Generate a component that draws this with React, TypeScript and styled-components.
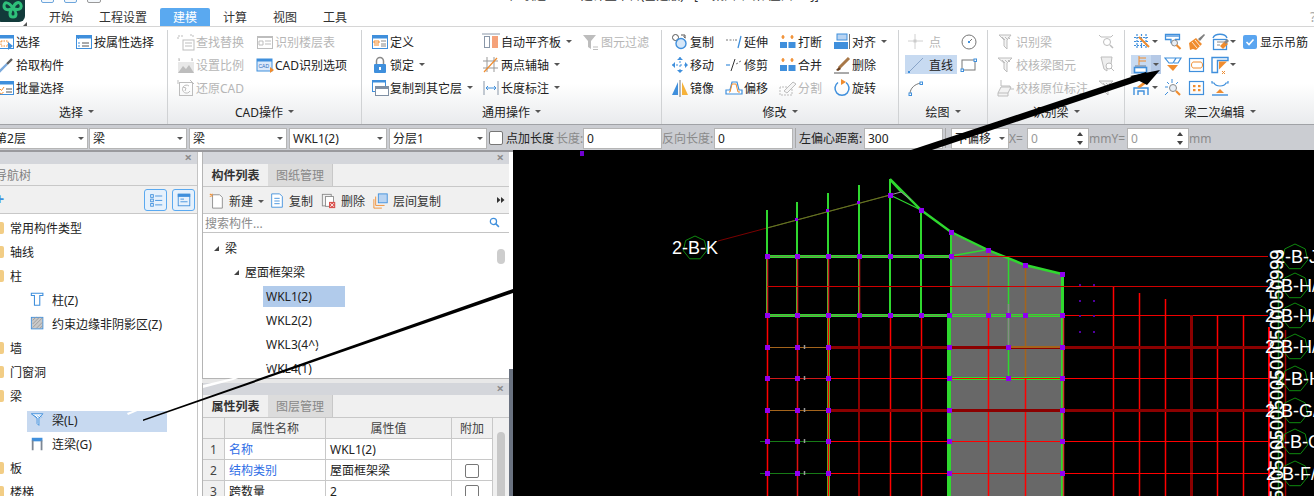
import React from "react";
import styled, { createGlobalStyle } from "styled-components";

const B = "#3f8fdc";
const O = "#f08c2e";
const G = "#bdbdbd";

const GlobalStyle = createGlobalStyle`
  html, body { margin: 0; padding: 0; background: #fff; overflow: hidden; }
  body { font-family: "Noto Sans", "Noto Sans CJK SC", sans-serif; font-size: 12px; color: #222; }
  * { box-sizing: border-box; }
`;

const Page = styled.div`
  position: relative; width: 1314px; height: 496px; overflow: hidden;
  display: flex; flex-direction: column; background: #fff;
`;
const TitleBar = styled.div`
  height: 8px; flex: none; display: flex; align-items: flex-end; overflow: hidden; padding: 0 0 5px 41px;
`;
const QuickIcon = styled.div<{ $w: number; $c: string }>`
  flex: none; width: ${(p) => p.$w}px; height: 14px; margin-right: 10px;
  border: 1px solid ${(p) => p.$c}; border-radius: 2px; background: #f4f8fc;
`;
const TitleText = styled.div`
  position: absolute; left: 510px; top: -11px; line-height: 14px; font-size: 12px; color: #333; white-space: nowrap;
`;
const Logo = styled.div`
  position: absolute; left: -4px; top: -7px; width: 29px; height: 29px; border-radius: 6px; background: #123a3a;
  display: flex; align-items: center; justify-content: center;
`;
const LogoCorner = styled.div`
  position: absolute; left: 23px; top: 22px; width: 0; height: 0;
  border-left: 4px solid transparent; border-bottom: 4px solid #555;
`;
const Help = styled.div`
  position: absolute; right: -2px; top: 8px; font-size: 14px; color: #aaa; line-height: 18px;
`;
const Tabs = styled.div`
  height: 19px; flex: none; display: flex; padding-left: 36px; border-bottom: 1px solid #d6d6d6;
`;
const Tab = styled.div<{ $active?: boolean }>`
  height: 18px; padding: 0 13px; line-height: 19px; font-size: 12px; color: ${(p) => (p.$active ? "#fff" : "#333")};
  background: ${(p) => (p.$active ? "#5aa9f0" : "transparent")}; border-radius: 2px 2px 0 0;
`;
const Ribbon = styled.div`
  height: 97px; flex: none; display: flex; margin-left: -14px;
  background: linear-gradient(#fff 0, #fff 58%, #e9ebed 100%);
`;
const Group = styled.div<{ $w: number; $pad?: number; $last?: boolean }>`
  flex: none; width: ${(p) => p.$w}px; height: 94px; margin-top: 3px; padding-left: ${(p) => p.$pad ?? 9}px;
  border-right: ${(p) => (p.$last ? "none" : "1px solid #d0d2d4")};
  display: flex; flex-direction: column; position: relative;
`;
const GroupGrid = styled.div<{ $cols: string }>`
  display: grid; grid-template-columns: ${(p) => p.$cols}; grid-auto-rows: 23px; height: 69px;
`;
const GroupLabel = styled.div<{ $pad?: number }>`
  height: 24px; padding-top: 1px; display: flex; align-items: center; justify-content: center; gap: 5px;
  margin-left: -${(p) => p.$pad ?? 9}px; font-size: 12px; color: #222;
`;
const Caret = styled.span<{ $ml?: number }>`
  display: inline-block; width: 0; height: 0; margin-left: ${(p) => p.$ml ?? 0}px; flex: none;
  border-left: 3.5px solid transparent; border-right: 3.5px solid transparent; border-top: 3.5px solid #555;
`;
const Item = styled.div<{ $off?: boolean; $active?: boolean }>`
  display: flex; align-items: center; height: 23px; white-space: nowrap; font-size: 12px;
  color: ${(p) => (p.$off ? "#b6b6b6" : "#222")};
`;
const IconBox = styled.span`
  flex: none; width: 19px; height: 18px; display: block;
  svg { display: block; }
`;
const ActiveBlock = styled.div<{ $w: number }>`
  display: flex; align-items: center; height: 19px; margin: 2px 0 0 -2px; width: ${(p) => p.$w}px; padding-left: 2px;
  background: #c7daf1; white-space: nowrap;
`;
const ActiveCaret = styled.div`
  flex: none; width: 10px; height: 19px; margin-left: -1px; background: #b5c9e6; display: flex; align-items: center; justify-content: center;
`;
const Check = styled.div`
  flex: none; width: 14px; height: 14px; border-radius: 2px; background: #5aa5f0; margin-right: 3px;
  display: flex; align-items: center; justify-content: center;
`;

const OptionBar = styled.div`
  height: 26px; flex: none; display: flex; align-items: center; background: #cbcdd2;
  border-top: 1px solid #a0a2a6; padding-top: 1px; margin-left: -12px; color: #222;
`;
const Select = styled.div<{ $w: number; $ml?: number }>`
  flex: none; width: ${(p) => p.$w}px; height: 21px; margin-left: ${(p) => p.$ml ?? 0}px; background: #fff;
  border: 1px solid #b5b5b5; display: flex; align-items: center; justify-content: space-between;
  padding: 0 3px 0 3px; white-space: nowrap;
`;
const BarCheck = styled.div`
  flex: none; width: 14px; height: 14px; margin: 0 3px 0 2px; border: 1px solid #777; border-radius: 2px; background: #fff;
`;
const BarLabel = styled.div<{ $w: number; $muted?: boolean }>`
  flex: none; width: ${(p) => p.$w}px; white-space: nowrap; color: ${(p) => (p.$muted ? "#8a8a8a" : "#222")};
`;
const BarInput = styled.div<{ $w: number; $muted?: boolean }>`
  flex: none; width: ${(p) => p.$w}px; height: 21px; background: #fff; border: 1px solid #b5b5b5; padding-left: 3px;
  line-height: 19px; color: ${(p) => (p.$muted ? "#999" : "#222")}; position: relative;
`;
const Spin = styled.div`
  position: absolute; right: 5px; top: 3px; height: 13px; display: flex; flex-direction: column; justify-content: space-between;
`;
const SpinUp = styled.span`
  display: block; width: 0; height: 0; border-left: 3.5px solid transparent; border-right: 3.5px solid transparent; border-bottom: 4px solid #444;
`;
const SpinDown = styled.span`
  display: block; width: 0; height: 0; border-left: 3.5px solid transparent; border-right: 3.5px solid transparent; border-top: 4px solid #444;
`;
const BarSep = styled.div<{ $ml: number; $mr: number }>`
  flex: none; width: 1px; height: 20px; background: #a8a8a8; margin: 0 ${(p) => p.$mr}px 0 ${(p) => p.$ml}px;
`;

const Workspace = styled.div`
  flex: 1; min-height: 0; display: flex; border-top: 2px solid #9a9a9e;
`;
const NavPanel = styled.div`
  flex: none; width: 198px; border-right: 1px solid #c4c4c4; display: flex; flex-direction: column; overflow: hidden;
`;
const Gutter = styled.div`
  flex: none; width: 4px; background: #fff;
`;
const PanelBar = styled.div`
  height: 12px; flex: none; background: #d4d6db; position: relative;
  &::after {
    content: "×"; position: absolute; right: 5px; top: -2px; line-height: 14px; font-size: 13px; font-weight: 700; color: #8c8c8c;
  }
`;
const NavTitle = styled.div`
  height: 22px; flex: none; background: #f0f0f0; border-bottom: 1px solid #c8c8c8; color: #808080;
  line-height: 23px; margin-left: -5px; padding-left: 0; font-size: 12px;
`;
const NavTools = styled.div`
  height: 28px; flex: none; background: #f0f0f0; border-bottom: 1px solid #c8c8c8; display: flex; align-items: center; justify-content: flex-end;
  padding-right: 2px; gap: 5px; position: relative;
`;
const NavToolBtn = styled.div`
  width: 23px; height: 22px; border: 1px solid #5aa9f0; border-radius: 3px; background: #e6f1fc;
  display: flex; align-items: center; justify-content: center;
`;
const PlusMark = styled.div`
  position: absolute; left: -5px; top: 5px; color: #3f8fdc; font-size: 16px; line-height: 16px; font-weight: 700;
`;
const NavTree = styled.div`
  flex: 1; padding-top: 2px; background: #fff; overflow: hidden;
`;
const NavRow = styled.div`
  height: 24px; display: flex; align-items: center; white-space: nowrap; position: relative;
  &[data-sel="1"]::before {
    content: ""; position: absolute; left: 27px; top: 3px; width: 140px; height: 21px; background: #c7d9f0;
  }
`;
const Folder = styled.span`
  flex: none; width: 4px; height: 12px; margin-right: 6px; background: #f2cd85; border-radius: 0 2px 2px 0;
`;
const NavIcon = styled.span`
  flex: none; width: 16px; height: 16px; margin: 0 6px 0 30px; position: relative; svg { display: block; }
`;
const NavText = styled.span`
  position: relative;
`;

const ListColumn = styled.div`
  flex: none; width: 307px; display: flex; flex-direction: column; min-height: 0; overflow: hidden;
`;
const ListPane = styled.div`
  height: 227px; flex: none; display: flex; flex-direction: column; background: #f0f0f0; border-left: 1px solid #b4b4b4;
`;
const PaneGap = styled.div`
  height: 4px; flex: none; background: #e8e8e8;
`;
const PaneTabs = styled.div`
  height: 23px; flex: none; display: flex; background: #f0f0f0; border-bottom: 1px solid #c8c8c8;
`;
const PaneTab = styled.div<{ $active?: boolean }>`
  width: 65px; text-align: center; line-height: 24px; font-weight: ${(p) => (p.$active ? 700 : 400)};
  color: ${(p) => (p.$active ? "#333" : "#888")}; background: ${(p) => (p.$active ? "#f0f0f0" : "#dcdcdc")};
  border-right: ${(p) => (p.$active ? "none" : "1px solid #c8c8c8")};
`;
const ListTools = styled.div`
  height: 27px; flex: none; display: flex; align-items: center; background: #f0f0f0; padding: 2px 0 0 6px; position: relative; border-bottom: 1px solid #c8c8c8;
`;
const ToolIcon = styled.span<{ $ml?: number }>`
  flex: none; width: 16px; height: 16px; margin: 0 4px 0 ${(p) => p.$ml ?? 0}px; svg { display: block; }
`;
const ToolText = styled.span<{ $mr: number }>`
  margin-right: ${(p) => p.$mr}px; white-space: nowrap; color: #333;
`;
const More = styled.span`
  position: absolute; right: 4px; top: 10px; svg { display: block; }
`;
const Search = styled.div`
  height: 19px; flex: none; background: #fff; border-bottom: 1px solid #c4c4c4; color: #8c8c8c; line-height: 20px; padding-left: 2px; position: relative;
  svg { position: absolute; right: 7px; top: 2px; }
`;
const ListTree = styled.div`
  flex: 1; background: #fff; border-bottom: 1px solid #b4b4b4; padding-top: 3px; position: relative; overflow: hidden;
`;
const ListRow = styled.div<{ $indent: number }>`
  height: 24px; display: flex; align-items: center; padding-left: ${(p) => p.$indent}px; position: relative;
`;
const Tri = styled.span`
  flex: none; width: 0; height: 0; margin-right: 6px; margin-left: 0;
  border-left: 5px solid transparent; border-bottom: 5px solid #444;
`;
const SelText = styled.span<{ $sel?: boolean }>`
  display: block; width: 82px; height: 21px; line-height: 21px; padding-left: 3px; background: ${(p) => (p.$sel ? "#b1cbeb" : "transparent")};
`;
const Thumb = styled.div`
  position: absolute; right: 4px; top: 16px; width: 8px; height: 15px; border-radius: 4px; background: #cdcdcd;
`;
const PropPane = styled.div`
  flex: 1; display: flex; flex-direction: column; background: #f0f0f0; border-left: 1px solid #b4b4b4; min-height: 0; position: relative;
`;
const PropGrid = styled.div`
  display: grid; grid-template-columns: 22px 101px 126px 41px; grid-auto-rows: 21px; width: 290px;
`;
const PropCell = styled.div<{ $head?: boolean; $link?: boolean; $center?: boolean }>`
  border-right: 1px solid #c8c8c8; border-bottom: 1px solid #c8c8c8;
  background: ${(p) => (p.$head ? "#f0f0f0" : "#fff")}; color: ${(p) => (p.$link ? "#2f6ee6" : p.$head ? "#444" : "#222")};
  display: flex; align-items: center; justify-content: ${(p) => (p.$center ? "center" : "flex-start")};
  padding: 1px 0 0 ${(p) => (p.$center ? 0 : 4)}px; white-space: nowrap; line-height: 19px;
`;
const PropBox = styled.span`
  width: 14px; height: 14px; border: 1px solid #777; border-radius: 2px; background: #fff;
`;
const PropThumb = styled.div`
  position: absolute; right: 4px; top: 49px; width: 8px; height: 80px; border-radius: 4px; background: #c8c8c8;
`;
const Splitter = styled.div`
  flex: none; width: 4px; display: flex; flex-direction: column;
`;
const SplitTop = styled.div`
  height: 217px; flex: none; background: #fff;
`;
const SplitBottom = styled.div`
  flex: 1; background: #6a7280;
`;
const Canvas = styled.div`
  flex: 1; background: #000; min-width: 0; overflow: hidden; margin-top: -2px; position: relative;
  svg { display: block; }
`;
const Overlay = styled.svg`
  position: absolute; left: 0; top: 0; pointer-events: none;
`;

const S = ({ children, w = 18 }: { children: React.ReactNode; w?: number }) => (
  <svg width={w} height={w} viewBox="0 0 18 18" fill="none">
    {children}
  </svg>
);

const win = (c: string) => (
  <>
    <rect x="1.5" y="2.5" width="15" height="13" fill="#fff" stroke={c} />
    <rect x="1" y="2" width="16" height="3.5" fill={c} />
  </>
);
const hatch = (c: string) => <path d="M5 4l3 3M8 4l3 3M11 4l2 2" stroke={c} />;
const breakIcon = (
  <>
    <path d="M4 2v4M2.5 4h3M13 2v4M11.5 4h3" stroke={O} strokeWidth="1.4" />
    <rect x="1" y="9" width="7" height="6" fill={B} />
    <rect x="9.5" y="9" width="7" height="6" fill={B} />
  </>
);

const icons: Record<string, React.ReactNode> = {
  select: <>{win(B)}<rect x="4" y="8" width="7" height="5" stroke={O} strokeDasharray="1.5 1" /><path d="M11 9v8l5-4z" fill={B} /></>,
  attrSel: <>{win(B)}<path d="M3 5.5h1M3 10h2M3 13h2" stroke={B} /><path d="M7 10h7M7 13h7" stroke="#555" /></>,
  pick: <><path d="M2 16l8-8" stroke="#7aa9dc" strokeWidth="2.4" /><path d="M10 8l5-5" stroke="#5d5d5d" strokeWidth="2.4" /></>,
  batch: <>{win(B)}<path d="M3 10l1.5 1.5L7 8M3 14l1.5 1 2-2" stroke={O} /><path d="M9 10h6M9 13h6" stroke="#555" /></>,
  find: <><path d="M1 3h5M1 6V3M13 2h3v3" stroke={G} strokeDasharray="2 1" /><rect x="6" y="7" width="11" height="10" stroke={G} fill="#fff" /><path d="M8 10h7M8 13h7" stroke={G} /></>,
  floor: <><rect x="1.5" y="3.5" width="15" height="12" stroke={G} fill="#fff" /><rect x="1" y="3" width="16" height="2" fill={G} /><path d="M3 8h4v4H3zM9 8h6M9 11h6" stroke={G} /></>,
  scale: <><path d="M2 4h1M15 4h1M2 2v3M15 2v3" stroke={G} /><rect x="1" y="6" width="16" height="11" fill="#e8e8e8" /><path d="M1 17l5-7 3 3 3-4 5 8z" fill={G} /></>,
  cadOpt: <><rect x="1" y="3" width="15" height="12" fill="#dceafa" stroke={B} /><rect x="1" y="3" width="15" height="2.5" fill={B} /><text x="2.5" y="12" fontSize="5" fill="#2f6ec0" fontFamily="Liberation Sans">CAD</text><path d="M14 11v6l4-3z" fill={O} /></>,
  restore: <><rect x="2.5" y="3.5" width="13" height="13" stroke={G} /><path d="M1 1v4M13 1l4 4M12 7a4 4 0 1 0 1 5M6 8l3 1-1 3" stroke={G} /></>,
  define: <>{win(B)}<path d="M3 8h5v2H3zM3 12h5" stroke={O} /><path d="M10 8h5M10 11h5M10 13h5" stroke="#888" /></>,
  lock: <><path d="M5.5 8V5a3.5 3.5 0 0 1 7 0v3" stroke="#8a8a8a" strokeWidth="1.5" /><rect x="3" y="8" width="12" height="9" rx="1" fill={B} /><rect x="8" y="11" width="2" height="3" fill="#fff" /></>,
  copyFloor: <><rect x="1.5" y="1.5" width="13" height="11" fill="#fff" stroke={B} /><rect x="1" y="1" width="14" height="2.5" fill={B} /><rect x="4.5" y="7.5" width="13" height="9" fill="#fff" stroke="#7f8fa3" /><rect x="4" y="7" width="14" height="3" fill="#7f8fa3" /></>,
  autoAlign: <><path d="M0 1h18" stroke="#8a97a8" /><rect x="2.5" y="3.5" width="5" height="11" stroke="#8a97a8" /><rect x="10" y="3" width="6" height="12" fill="#f5a27a" /></>,
  twoPoint: <><path d="M5 1v15M12 1v15M1 5h15M1 12h15" stroke="#999" /><path d="M2 16L15 2" stroke={O} strokeWidth="1.2" /></>,
  dim: <><path d="M2 2v14M16 2v14" stroke="#8a97a8" /><path d="M4 9h10M6 7L4 9l2 2M12 7l2 2-2 2" stroke={B} /></>,
  filter: <><path d="M1 2h13L9 8v8l-3-2V8z" fill={G} /><path d="M11 14h5M11 16.5h5" stroke={G} /></>,
  copy: <><circle cx="4.5" cy="4.5" r="3" stroke="#555" /><circle cx="10" cy="10.5" r="5" stroke={B} strokeWidth="1.4" fill="#d6e7f8" /><path d="M10 2h4v3M12.5 3.5l2 1.5" stroke="#555" /></>,
  extend: <><path d="M1 7h8" stroke="#777" strokeDasharray="2 1.5" /><path d="M10 7l2 0" stroke="#777" /><path d="M13 15l3-12" stroke={B} strokeWidth="1.3" /></>,
  brk: breakIcon,
  align: <><rect x="4" y="1" width="10" height="6" fill="#b9d4f2" stroke={B} /><rect x="1" y="9" width="14" height="7" fill={B} /><path d="M16.5 1v15" stroke="#777" /></>,
  move: <><path d="M9 1v16M1 9h16" stroke={B} strokeWidth="1" strokeDasharray="2 2" /><path d="M9 1l-3 3h6zM9 17l-3-3h6zM1 9l3-3v6zM17 9l-3-3v6z" fill={B} /></>,
  trim: <><path d="M1 9h4" stroke={B} strokeWidth="1.2" /><path d="M6 15l4-12" stroke="#333" /><path d="M11 8l2-1M14 6l2-1" stroke="#777" /></>,
  merge: breakIcon,
  del: <><path d="M6 12L16 2" stroke="#a87848" strokeWidth="3" /><path d="M3 14l3-3 2 2-3 2z" fill="#6a4020" /><path d="M1 17h15" stroke="#555" /></>,
  mirror: <><path d="M7 3v13H1z" fill={B} /><path d="M9 1v17" stroke="#777" /><path d="M11 3v13h6z" fill="#f6b23a" /></>,
  offset: <><path d="M1 15v-4h4l2-8h5l2 8h3v4z" fill="#fff" stroke={B} strokeWidth="1.2" /><path d="M4 13h1l2-8h4l2 8h2" stroke={O} /></>,
  split: <><path d="M1 8v8h12V8z" stroke={G} strokeDasharray="2 1" /><path d="M5 12L14 3l3 2-9 9z" stroke={G} fill="#f6f6f6" /></>,
  rotate: <><path d="M13 3.5a7 7 0 1 1-8 0" stroke={B} strokeWidth="1.5" /><path d="M8 0v6l5-3z" fill={O} /></>,
  point: <><path d="M8 1v15M1 8h15" stroke="#d0d0d0" /><rect x="6.5" y="6.5" width="3" height="3" fill="#ccc" /></>,
  circle: <><circle cx="9" cy="9" r="7" stroke="#777" /><path d="M9 9l3-3" stroke="#777" /><rect x="8" y="8" width="2" height="2" fill={B} /></>,
  line: <><path d="M2 16L16 2" stroke="#88a4c8" /><rect x="1" y="15" width="2" height="2" fill={B} /></>,
  rect: <><rect x="2" y="4" width="13" height="10" stroke="#777" /><rect x="14" y="3" width="2.5" height="2.5" fill="#fff" stroke={B} /><rect x="1" y="13" width="2.5" height="2.5" fill="#fff" stroke={B} /></>,
  arc: <><path d="M3 15c0-6 5-10 11-11" stroke="#777" /><rect x="2" y="14" width="2.5" height="2.5" fill="#fff" stroke={B} /><rect x="13" y="3" width="2.5" height="2.5" fill="#fff" stroke={B} /></>,
  beamF: <><path d="M2 2h12l-4 5v9l-3-3V7z" stroke={G} fill="#f3f3f3" />{hatch(G)}</>,
  beamM: <><path d="M1 2h14l-5 5v9l-3-3V7z" stroke={G} fill="#f3f3f3" />{hatch(G)}</>,
  beamC: <><path d="M4 1v6h9v3h4" stroke={G} /><path d="M1 14l3-6h10l-3 6zM1 14v3h10v-3" stroke={G} fill="#f3f3f3" /></>,
  chkA: <><path d="M1 2l2 2h10l2-2" stroke={G} /><circle cx="9" cy="9" r="3.5" stroke={G} /><path d="M12 12l3 3" stroke={G} strokeWidth="1.5" /></>,
  chkB: <><path d="M3 1h11l-1 7H9v7l-3-2z" stroke={G} fill="#eee" /><circle cx="11" cy="10" r="3" stroke={G} fill="#fff" /><path d="M13 12l3 3" stroke={G} /></>,
  grid: <><path d="M4 1v15M8.5 1v15M13 1v15M1 4.5h15M1 8.5h15M1 12.5h15" stroke={B} strokeWidth="1.2" strokeDasharray="2 1" /><path d="M6 4l10 10" stroke={O} strokeWidth="2" /></>,
  beamS: <><path d="M1.5 1.5h14v5h-4l-1 3H7V6.5H1.5z" fill="#fff" stroke={B} strokeWidth="1.3" /><rect x="2" y="2" width="13" height="2" fill="#7fb2e6" /><circle cx="10.5" cy="10" r="3" fill="#e8eef5" stroke="#8a8a8a" /><path d="M12.5 12l4 4" stroke={O} strokeWidth="2.2" /></>,
  brush: <><path d="M1 10l7-5 6 6-6 6-3-1-3 1z" fill={O} /><path d="M4 9l5 6M7 7l5 6" stroke="#fff" strokeWidth=".8" /><path d="M10 6l6-5 1 1-5 6z" fill="#7f7f7f" /></>,
  ring: <><path d="M2 5C4 0 14 0 16 5" stroke={B} strokeWidth="1.4" /><rect x="2.5" y="6.5" width="13" height="10" fill="#fff" stroke={B} strokeWidth="1.3" /><path d="M6 9h7M6 12h3" stroke="#888" /><path d="M9 13l5-5 3 3-5 5z" fill={O} /><path d="M13 9l3-3 2 2-3 3z" fill="#888" /></>,
  hanger: <><path d="M6 0v9" stroke={O} strokeWidth="1" /><path d="M6 2h7M6 5h7" stroke={O} /><path d="M2 10h11" stroke="#6a7c90" /><rect x="1.5" y="11.5" width="12" height="5" stroke={B} strokeWidth="1.6" fill="#fff" /></>,
  funnelO: <><path d="M1 2h11l-3 5H5zM11 2h6l-3 5h-4" stroke={B} strokeWidth="1.2" fill="#fff" /><path d="M3 9h11l-5 6z" fill={O} /></>,
  bracket: <><rect x="1.5" y="2.5" width="14" height="13" stroke={B} strokeWidth="1.2" /><path d="M5 6h8M5 12h8" stroke={O} /><path d="M5 6c-2 1-2 5 0 6M13 6c2 1 2 5 0 6" stroke={O} /></>,
  corner: <><path d="M1 1.5h16v3H6.5v12H1z" fill="#fff" stroke={B} strokeWidth="1.4" /><path d="M8 5.5h8l-8 8z" fill={O} /><path d="M11 15l3 3M14 15l-3 3" stroke={O} /></>,
  pen: <><path d="M1 16V9h14v7M5 16v-4h6v4" stroke={B} strokeWidth="1.4" /><path d="M4 8l9-7 2 2-8 6z" fill={O} /></>,
  spark: <><path d="M8 0v4M1 8h3M1 16l3-3M3 3l2 2M14 3l-2 2" stroke={B} /><circle cx="9" cy="9" r="3.5" stroke="#8a8a8a" fill="#e8eef5" /><path d="M12 12l4 4" stroke={O} strokeWidth="2.2" /></>,
  dots: <><rect x="1.5" y="2.5" width="14" height="13" stroke={B} strokeWidth="1.2" /><rect x="5" y="6" width="2.5" height="2.2" fill={O} /><rect x="10" y="6" width="2.5" height="2.2" fill={O} /><rect x="5" y="10" width="2.5" height="2.2" fill={O} /><rect x="10" y="10" width="2.5" height="2.2" fill={O} /></>,
  arcO: <><path d="M1 2v2h2c2 4 10 4 12 0h2V2" stroke={B} strokeWidth="1.2" /><path d="M5 14l4-4 4 4z" fill={O} /><path d="M1 16h16" stroke={B} strokeWidth="1.4" /></>,
  nList: <><rect x="3" y="3" width="3" height="3" stroke={B} /><rect x="3" y="8" width="3" height="3" stroke={B} /><rect x="3" y="13" width="3" height="3" stroke={B} /><path d="M8 4.5h8M8 9.5h8M8 14.5h8" stroke={B} /></>,
  nWin: <><rect x="2.5" y="2.5" width="13" height="13" stroke={B} /><rect x="2" y="2" width="14" height="3.5" fill={B} /><path d="M5 8h4M5 11h8" stroke={B} /></>,
  col: <><path d="M1.5 1.5h13v2.5h-3.5v11H5V4H1.5z" stroke={B} fill="#fff" strokeWidth="1.2" /></>,
  area: <><rect x="1.5" y="1.5" width="13" height="13" stroke={B} fill="#c8c8c8" /><path d="M3 5l4-4M3 9l8-8M3 13l11-11M7 14l7-7M11 14l3-3" stroke="#999" /></>,
  beamL: <><path d="M1.5 2h13l-4.5 5v8l-2-2V7z" stroke={B} fill="#fff" strokeWidth="1.1" />{hatch(B)}</>,
  link: <><rect x="2" y="2" width="12" height="4" fill={B} /><path d="M3 5v11M13 5v11" stroke="#7d8794" strokeWidth="2" /></>,
  newDoc: <><path d="M4 2h8l3 3v12H4z" fill="#fff" stroke="#8a8a8a" /><path d="M1 1l3 3M4 1L1 4" stroke={O} strokeWidth="1.2" /></>,
  dup: <><path d="M3 1h9l3 3v12H3z" fill="#fff" stroke={B} /><path d="M6 6h6M6 9h6M6 12h6" stroke={B} /></>,
  rm: <><rect x="1.5" y="1.5" width="10" height="13" stroke="#8a8a8a" /><rect x="5" y="4" width="9" height="11" stroke="#8a8a8a" fill="#fff" /><rect x="9" y="10" width="7" height="7" fill="#d9534f" /><path d="M10.5 11.5l4 4M14.5 11.5l-4 4" stroke="#fff" /></>,
  layerCopy: <><rect x="6" y="1" width="10" height="10" fill="#b9d4f2" stroke={B} /><path d="M3 4v10h10M1 7v10h9" stroke={O} /></>,
  search: <><circle cx="7" cy="7" r="4" stroke={B} strokeWidth="1.6" /><path d="M10 10l4 4" stroke={B} strokeWidth="2" /></>,
};

const Ic = ({ n }: { n: string }) => (
  <IconBox>
    <S>{icons[n]}</S>
  </IconBox>
);

type Cell = { i?: string; t?: string; off?: boolean; caret?: boolean };
const RCell = ({ c }: { c: Cell }) => (
  <Item $off={c.off}>
    {c.i && <Ic n={c.i} />}
    {c.t && <span>{c.t}</span>}
    {c.caret && <Caret $ml={5} />}
  </Item>
);

const G1: Cell[] = [
  { i: "select", t: "选择" }, { i: "attrSel", t: "按属性选择" },
  { i: "pick", t: "拾取构件" }, {},
  { i: "batch", t: "批量选择" }, {},
];
const G2: Cell[] = [
  { i: "find", t: "查找替换", off: true }, { i: "floor", t: "识别楼层表", off: true },
  { i: "scale", t: "设置比例", off: true }, { i: "cadOpt", t: "CAD识别选项" },
  { i: "restore", t: "还原CAD", off: true }, {},
];
const G3: Cell[] = [
  { i: "define", t: "定义" }, { i: "autoAlign", t: "自动平齐板", caret: true }, { i: "filter", t: "图元过滤", off: true },
  { i: "lock", t: "锁定", caret: true }, { i: "twoPoint", t: "两点辅轴", caret: true }, {},
  { i: "copyFloor", t: "复制到其它层", caret: true }, { i: "dim", t: "长度标注", caret: true }, {},
];
const G4: Cell[] = [
  { i: "copy", t: "复制" }, { i: "extend", t: "延伸" }, { i: "brk", t: "打断" }, { i: "align", t: "对齐", caret: true },
  { i: "move", t: "移动" }, { i: "trim", t: "修剪" }, { i: "merge", t: "合并" }, { i: "del", t: "删除" },
  { i: "mirror", t: "镜像" }, { i: "offset", t: "偏移" }, { i: "split", t: "分割", off: true }, { i: "rotate", t: "旋转" },
];
const G6: Cell[] = [
  { i: "beamF", t: "识别梁", off: true }, { i: "chkA" },
  { i: "beamM", t: "校核梁图元", off: true }, { i: "chkB" },
  { i: "beamC", t: "校核原位标注", off: true }, { i: "beamM" },
];

const Row = ({ label, pad, children, w, last }: { label: string; pad?: number; children: React.ReactNode; w: number; last?: boolean }) => (
  <Group $w={w} $pad={pad} $last={last}>
    {children}
    <GroupLabel $pad={pad}>
      {label}
      <Caret />
    </GroupLabel>
  </Group>
);

const SvgIcon = ({ n, s = 16 }: { n: string; s?: number }) => <S w={s}>{icons[n]}</S>;

const Cad = () => {
  const gn = "#2fd82f";
  const rd = "#ff0000";
  const dk = "#8b0000";
  const or = "#a4641c";
  const gy = "#686868";
  const L = (x1: number, y1: number, x2: number, y2: number, c: string, w = 1, k?: string) => {
    const vertical = x1 === x2;
    const odd = w % 2 === 1;
    const sw = vertical && w === 1 ? 1.5 : w;
    const dx = vertical && odd ? 0.5 : 0;
    const dy = y1 === y2 && odd ? 0.5 : 0;
    return (
      <line key={k ?? `${x1}-${y1}-${x2}-${y2}-${c}`} x1={x1 + dx} y1={y1 + dy} x2={x2 + dx} y2={y2 + dy} stroke={c} strokeWidth={sw} />
    );
  };
  const rows = [347, 378, 410, 441, 473];
  const nodesTop = [767, 797, 828, 859, 890, 921, 951];
  const nodesMid = [767, 797, 828, 859, 890, 921, 949, 988, 1008, 1025, 1062];
  const hex = (cx: number, cy: number, r = 12) => {
    const p = Array.from({ length: 7 }, (_, i) => {
      const a = (Math.PI * 2 * i) / 7 - Math.PI / 2;
      return `${(cx + r * Math.cos(a)).toFixed(1)},${(cy + r * Math.sin(a)).toFixed(1)}`;
    }).join(" ");
    return <polygon key={`h${cy}`} points={p} fill="none" stroke="#0f8a0f" />;
  };
  const labels: [number, number, string][] = [
    [1275, 263, "2-B-J/1"], [1265, 292, "2-B-H/3"], [1265, 322, "2-B-H/2"], [1265, 353, "2-B-H/1"],
    [1275, 385, "2-B-H"], [1265, 417, "2-B-G/1"], [1274, 448, "2-B-G"], [1266, 480, "2-B-F/1"],
  ];
  return (
    <svg width="801" height="346" viewBox="513 150 801 346" fontFamily="Liberation Sans, sans-serif">
      <polygon points="951,233 988,250 1025,265 1062,274 1062,496 949,496 949,315 951,315" fill={gy} />
      {L(718, 241, 767, 228, "#7a0000")}
      {L(767, 228, 890, 195, or, 1.2)}
      {L(767, 228, 890, 195, "#2a8a2a", 0.6, "roofg")}
      {([[767, 210], [797, 202], [828, 193], [859, 185], [890, 179], [921, 210]] as const).map(([x, y]) => L(x, y, x, 315, gn, 2, `v${x}`))}
      {[767, 797, 828, 859].map((x) => L(x, 256, x, 315, "#d02020", 1, `vr${x}`))}
      {L(890, 180, 901, 192, gn, 1.5)}
      <polyline points="890,179 921,210 951,232 988,250 1025,265 1062,274" fill="none" stroke={gn} strokeWidth="2.4" />
      <polyline points="890,195 921,210" fill="none" stroke={gn} strokeWidth="1.2" />
      <polyline points="890,195 901,192 911,200" fill="none" stroke="#999" strokeWidth="1" />
      <polyline points="951,256 985,250" fill="none" stroke={gn} strokeWidth="1.5" />
      {L(1008, 258, 1008, 378, gn, 1)}
      {L(1008, 304, 1008, 345, "#888", 1, "gmid")}
      {L(988, 250, 988, 315, or, 1)}
      {L(1025, 265, 1025, 378, or, 1)}
      {L(1062, 274, 1062, 496, gn, 3)}
      {L(951, 233, 951, 315, gn, 2)}
      {L(949, 315, 949, 496, gn, 4)}
      {L(828, 315, 828, 496, gn, 3)}
      {L(767, 256, 951, 256, gn, 3)}
      {L(767, 256, 951, 256, "#6e8e4e", 1, "h256r")}
      {L(767, 315, 1062, 315, gn, 3)}
      {L(767, 315, 1062, 315, "#6e8e4e", 1, "h315r")}
      {L(951, 378, 1062, 378, gn, 3, "g378")}
      {L(951, 256, 1268, 256, "#d00000", 1, "r256")}
      {L(767, 286, 1268, 286, "#d00000", 1, "r286")}
      {L(1062, 315, 1268, 315, "#f00000", 1, "r315")}
      {L(767, 315, 767, 496, rd, 1, "d767")}
      {L(797, 315, 797, 496, "#e01010", 1, "d797")}
      {L(828, 315, 828, 496, rd, 1, "d828")}
      {L(859, 315, 859, 496, dk, 2, "d859")}
      {L(890, 315, 890, 496, rd, 1, "d890")}
      {L(921, 315, 921, 496, rd, 1, "d921")}
      {L(988, 315, 988, 496, rd, 1, "d988")}
      {L(1025, 378, 1025, 496, rd, 1, "d1025")}
      {L(1063, 315, 1063, 496, "#d03030", 1, "d1062")}
      {L(1113, 287, 1113, 496, rd, 1, "d1113")}
      {L(1139, 293, 1139, 496, rd, 1, "d1139")}
      {L(1165, 299, 1165, 496, rd, 1, "d1165")}
      {L(1191, 315, 1191, 496, dk, 3, "d1191")}
      {L(1217, 315, 1217, 496, rd, 1, "d1217")}
      {L(1243, 315, 1243, 496, rd, 1, "d1243")}
      {L(1269, 327, 1269, 496, rd, 2, "d1269")}
      {L(1285, 330, 1285, 496, "#a00000", 1, "d1285")}
      {L(1278, 265, 1278, 496, "#1a8a1a", 1, "d1278")}
      {rows.map((y) => {
        const heavy = y === 347 || y === 410;
        return (
          <g key={y}>
            {L(y > 420 ? 760 : 767, y, 828, y, y > 420 ? "#167a16" : heavy ? or : "#d01818", 1, `a${y}`)}
            {L(828, y, 1268, y, heavy ? dk : rd, heavy ? 3 : 1, `b${y}`)}
            {L(804, y - 2, 804, y + 2, "#999", 1, `t${y}`)}
          </g>
        );
      })}
      {L(1008, 347, 1062, 347, or, 2, "o347")}
      {nodesTop.map((x) => <rect key={`nt${x}`} x={x - 2} y={254} width="5" height="5" fill="#9000f0" />)}
      {nodesMid.map((x) => <rect key={`nm${x}`} x={x - 2} y={313} width="5" height="5" fill="#9000f0" />)}
      {rows.flatMap((y) => [767, 797, 828, 949, 1062].map((x) => <rect key={`n${x}-${y}`} x={x - 2} y={y - 2} width="5" height="5" fill="#9000f0" />))}
      <rect x="1006" y="345" width="5" height="5" fill="#9000f0" />
      <rect x="1006" y="376" width="5" height="5" fill="#9000f0" />
      {([[890, 195], [921, 210], [951, 232], [988, 250], [1025, 265], [1062, 274], [797, 220], [828, 211], [859, 203]] as const).map(([x, y], i) => (
        <rect key={`np${i}`} x={x - 2} y={y - 2} width={i < 6 ? 5 : 3} height={i < 6 ? 5 : 3} fill="#9000f0" />
      ))}
      {[284, 300, 315, 331].flatMap((y) => [1079, 1093].map((x) => <rect key={`d${x}-${y}`} x={x} y={y} width="2" height="2" fill="#5000a0" />))}
      {hex(695, 248)}
      <text x="672" y="254" fontSize="18" fill="#fff">2-B-K</text>
      {[257, 286, 316, 347, 379, 411, 442, 474].map((y) => hex(1295, y, 13))}
      {labels.map(([x, y, t]) => (
        <text key={y} x={x} y={y} fontSize="18" fill="#fff">{t}</text>
      ))}
      <text transform="translate(1283 500) rotate(-90)" fontSize="18" fill="#fff" stroke="#fff" strokeWidth="0.2">5005005005005000500050999</text>
    </svg>
  );
};

export default function App() {
  return (
    <Page>
      <GlobalStyle />
      <TitleBar>
        <QuickIcon $w={13} $c="#6ea6dc" />
        <QuickIcon $w={13} $c="#6ea6dc" />
        <QuickIcon $w={14} $c="#999" />
        <TitleText>广联达BIM土建计量平台(基建版) - [F:\桌面\框架\屋面.GTJ]</TitleText>
      </TitleBar>
      <Logo>
        <svg width="24" height="24" viewBox="0 0 24 24" fill="none">
          <path d="M14 12C9 5 5 6 5 10s5 5 9 2c-4 3-4 9 0 9s4-5 0-9c5 3 9 1 8-3s-6-3-8 3z" stroke="#2fbf7a" strokeWidth="3" />
        </svg>
      </Logo>
      <LogoCorner />
      <Help>?</Help>
      <Tabs>
        <Tab>开始</Tab>
        <Tab>工程设置</Tab>
        <Tab $active>建模</Tab>
        <Tab>计算</Tab>
        <Tab>视图</Tab>
        <Tab>工具</Tab>
      </Tabs>
      <Ribbon>
        <Row label="选择" w={182} pad={11}>
          <GroupGrid $cols="78px 90px">{G1.map((c, i) => <RCell key={i} c={c} />)}</GroupGrid>
        </Row>
        <Row label="CAD操作" w={194}>
          <GroupGrid $cols="79px 105px">{G2.map((c, i) => <RCell key={i} c={c} />)}</GroupGrid>
        </Row>
        <Row label="通用操作" w={300}>
          <GroupGrid $cols="111px 100px 79px">{G3.map((c, i) => <RCell key={i} c={c} />)}</GroupGrid>
        </Row>
        <Row label="修改" w={237}>
          <GroupGrid $cols="54px 54px 54px 64px">{G4.map((c, i) => <RCell key={i} c={c} />)}</GroupGrid>
        </Row>
        <Row label="绘图" w={89} pad={8}>
          <GroupGrid $cols="53px 24px">
            <Item $off><Ic n="point" /><span>&nbsp;点</span></Item>
            <Item><Ic n="circle" /></Item>
            <ActiveBlock $w={52}><Ic n="line" /><span>&nbsp;直线</span></ActiveBlock>
            <Item><Ic n="rect" /></Item>
            <Item><Ic n="arc" /></Item>
            <Item />
          </GroupGrid>
        </Row>
        <Row label="识别梁" w={137}>
          <GroupGrid $cols="101px 24px">{G6.map((c, i) => <RCell key={i} c={c} />)}</GroupGrid>
        </Row>
        <Row label="梁二次编辑" w={190} pad={8} last>
          <GroupGrid $cols="31px 24px 23px 32px 80px">
            <Item><Ic n="grid" /><Caret /></Item>
            <Item><Ic n="beamS" /></Item>
            <Item><Ic n="brush" /></Item>
            <Item><Ic n="ring" /><Caret /></Item>
            <Item><Check><svg width="10" height="10" viewBox="0 0 10 10" fill="none"><path d="M1.5 5l2.5 2.5L8.5 2.5" stroke="#fff" strokeWidth="1.6" /></svg></Check><span>显示吊筋</span></Item>
            <ActiveBlock $w={30}><Ic n="hanger" /><ActiveCaret><Caret /></ActiveCaret></ActiveBlock>
            <Item><Ic n="funnelO" /></Item>
            <Item><Ic n="bracket" /></Item>
            <Item><Ic n="corner" /><Caret /></Item>
            <Item />
            <Item><Ic n="pen" /><Caret /></Item>
            <Item><Ic n="spark" /></Item>
            <Item><Ic n="dots" /></Item>
            <Item><Ic n="arcO" /></Item>
            <Item />
          </GroupGrid>
        </Row>
      </Ribbon>
      <OptionBar>
        <Select $w={100}><span>&nbsp;第2层</span><Caret /></Select>
        <Select $w={98} $ml={1}><span>梁</span><Caret /></Select>
        <Select $w={98} $ml={2}><span>梁</span><Caret /></Select>
        <Select $w={98} $ml={2}><span>WKL1(2)</span><Caret /></Select>
        <Select $w={98} $ml={2}><span>分层1</span><Caret /></Select>
        <BarCheck />
        <BarLabel $w={50}>点加长度</BarLabel>
        <BarLabel $w={27} $muted>长度:</BarLabel>
        <BarInput $w={79}>0</BarInput>
        <BarLabel $w={52} $muted>反向长度:</BarLabel>
        <BarInput $w={79}>0</BarInput>
        <BarSep $ml={2} $mr={3} />
        <BarLabel $w={65}>左偏心距离:</BarLabel>
        <BarInput $w={79}>300</BarInput>
        <BarSep $ml={2} $mr={5} />
        <Select $w={58}><span>不偏移</span><Caret /></Select>
        <BarLabel $w={18} $muted>X=</BarLabel>
        <BarInput $w={62} $muted>0<Spin><SpinUp /><SpinDown /></Spin></BarInput>
        <BarLabel $w={38} $muted>mmY=</BarLabel>
        <BarInput $w={62} $muted>0<Spin><SpinUp /><SpinDown /></Spin></BarInput>
        <BarLabel $w={26} $muted>mm</BarLabel>
      </OptionBar>
      <Workspace>
        <NavPanel>
          <PanelBar />
          <NavTitle>导航树</NavTitle>
          <NavTools>
            <PlusMark>+</PlusMark>
            <NavToolBtn><SvgIcon n="nList" /></NavToolBtn>
            <NavToolBtn><SvgIcon n="nWin" /></NavToolBtn>
          </NavTools>
          <NavTree>
            <NavRow><Folder /><NavText>常用构件类型</NavText></NavRow>
            <NavRow><Folder /><NavText>轴线</NavText></NavRow>
            <NavRow><Folder /><NavText>柱</NavText></NavRow>
            <NavRow><NavIcon><SvgIcon n="col" /></NavIcon><NavText>柱(Z)</NavText></NavRow>
            <NavRow><NavIcon><SvgIcon n="area" /></NavIcon><NavText>约束边缘非阴影区(Z)</NavText></NavRow>
            <NavRow><Folder /><NavText>墙</NavText></NavRow>
            <NavRow><Folder /><NavText>门窗洞</NavText></NavRow>
            <NavRow><Folder /><NavText>梁</NavText></NavRow>
            <NavRow data-sel="1"><NavIcon><SvgIcon n="beamL" /></NavIcon><NavText>梁(L)</NavText></NavRow>
            <NavRow><NavIcon><SvgIcon n="link" /></NavIcon><NavText>连梁(G)</NavText></NavRow>
            <NavRow><Folder /><NavText>板</NavText></NavRow>
            <NavRow><Folder /><NavText>楼梯</NavText></NavRow>
          </NavTree>
        </NavPanel>
        <Gutter />
        <ListColumn>
          <ListPane>
            <PanelBar />
            <PaneTabs>
              <PaneTab $active>构件列表</PaneTab>
              <PaneTab>图纸管理</PaneTab>
            </PaneTabs>
            <ListTools>
              <ToolIcon><SvgIcon n="newDoc" /></ToolIcon>
              <ToolText $mr={5}>新建</ToolText>
              <Caret />
              <ToolIcon $ml={5}><SvgIcon n="dup" /></ToolIcon>
              <ToolText $mr={8}>复制</ToolText>
              <ToolIcon><SvgIcon n="rm" /></ToolIcon>
              <ToolText $mr={8}>删除</ToolText>
              <ToolIcon><SvgIcon n="layerCopy" /></ToolIcon>
              <ToolText $mr={0}>层间复制</ToolText>
              <More>
                <svg width="8" height="6" viewBox="0 0 8 6"><path d="M0 0l3.5 3L0 6zM4 0l3.5 3L4 6z" fill="#333" /></svg>
              </More>
            </ListTools>
            <Search>搜索构件...<SvgIcon n="search" s={14} /></Search>
            <ListTree>
              <ListRow $indent={11}><Tri />梁</ListRow>
              <ListRow $indent={31}><Tri />屋面框架梁</ListRow>
              <ListRow $indent={60}><SelText $sel>WKL1(2)</SelText></ListRow>
              <ListRow $indent={60}><SelText>WKL2(2)</SelText></ListRow>
              <ListRow $indent={60}><SelText>WKL3(4^)</SelText></ListRow>
              <ListRow $indent={60}><SelText>WKL4(1)</SelText></ListRow>
              <Thumb />
            </ListTree>
          </ListPane>
          <PaneGap />
          <PropPane>
            <PanelBar />
            <PaneTabs>
              <PaneTab $active>属性列表</PaneTab>
              <PaneTab>图层管理</PaneTab>
            </PaneTabs>
            <PropGrid>
              <PropCell $head />
              <PropCell $head $center>属性名称</PropCell>
              <PropCell $head $center>属性值</PropCell>
              <PropCell $head $center>附加</PropCell>
              <PropCell $head $center>1</PropCell>
              <PropCell $link>名称</PropCell>
              <PropCell>WKL1(2)</PropCell>
              <PropCell />
              <PropCell $head $center>2</PropCell>
              <PropCell $link>结构类别</PropCell>
              <PropCell>屋面框架梁</PropCell>
              <PropCell $center><PropBox /></PropCell>
              <PropCell $head $center>3</PropCell>
              <PropCell>跨数量</PropCell>
              <PropCell>2</PropCell>
              <PropCell $center><PropBox /></PropCell>
            </PropGrid>
            <PropThumb />
          </PropPane>
        </ListColumn>
        <Splitter>
          <SplitTop />
          <SplitBottom />
        </Splitter>
        <Canvas>
          <Cad />
        </Canvas>
      </Workspace>
      <Overlay width="1314" height="496" viewBox="0 0 1314 496">
        <polygon points="203,385 233,378 322,345 322,346 233,380 203,388" fill="#fff" />
        <polygon points="127,413 141,408 142,409 128,415" fill="#fff" />
        <polygon points="143,419.5 513,289 513,293 143,421" fill="#000" />
        <polygon points="905,152 1146,72 1148,78 908,158" fill="#000" />
        <polygon points="1160,70 1130,76 1147,85" fill="#000" />
        <rect x="580" y="151" width="4" height="5" fill="#7000d0" />
      </Overlay>
    </Page>
  );
}
